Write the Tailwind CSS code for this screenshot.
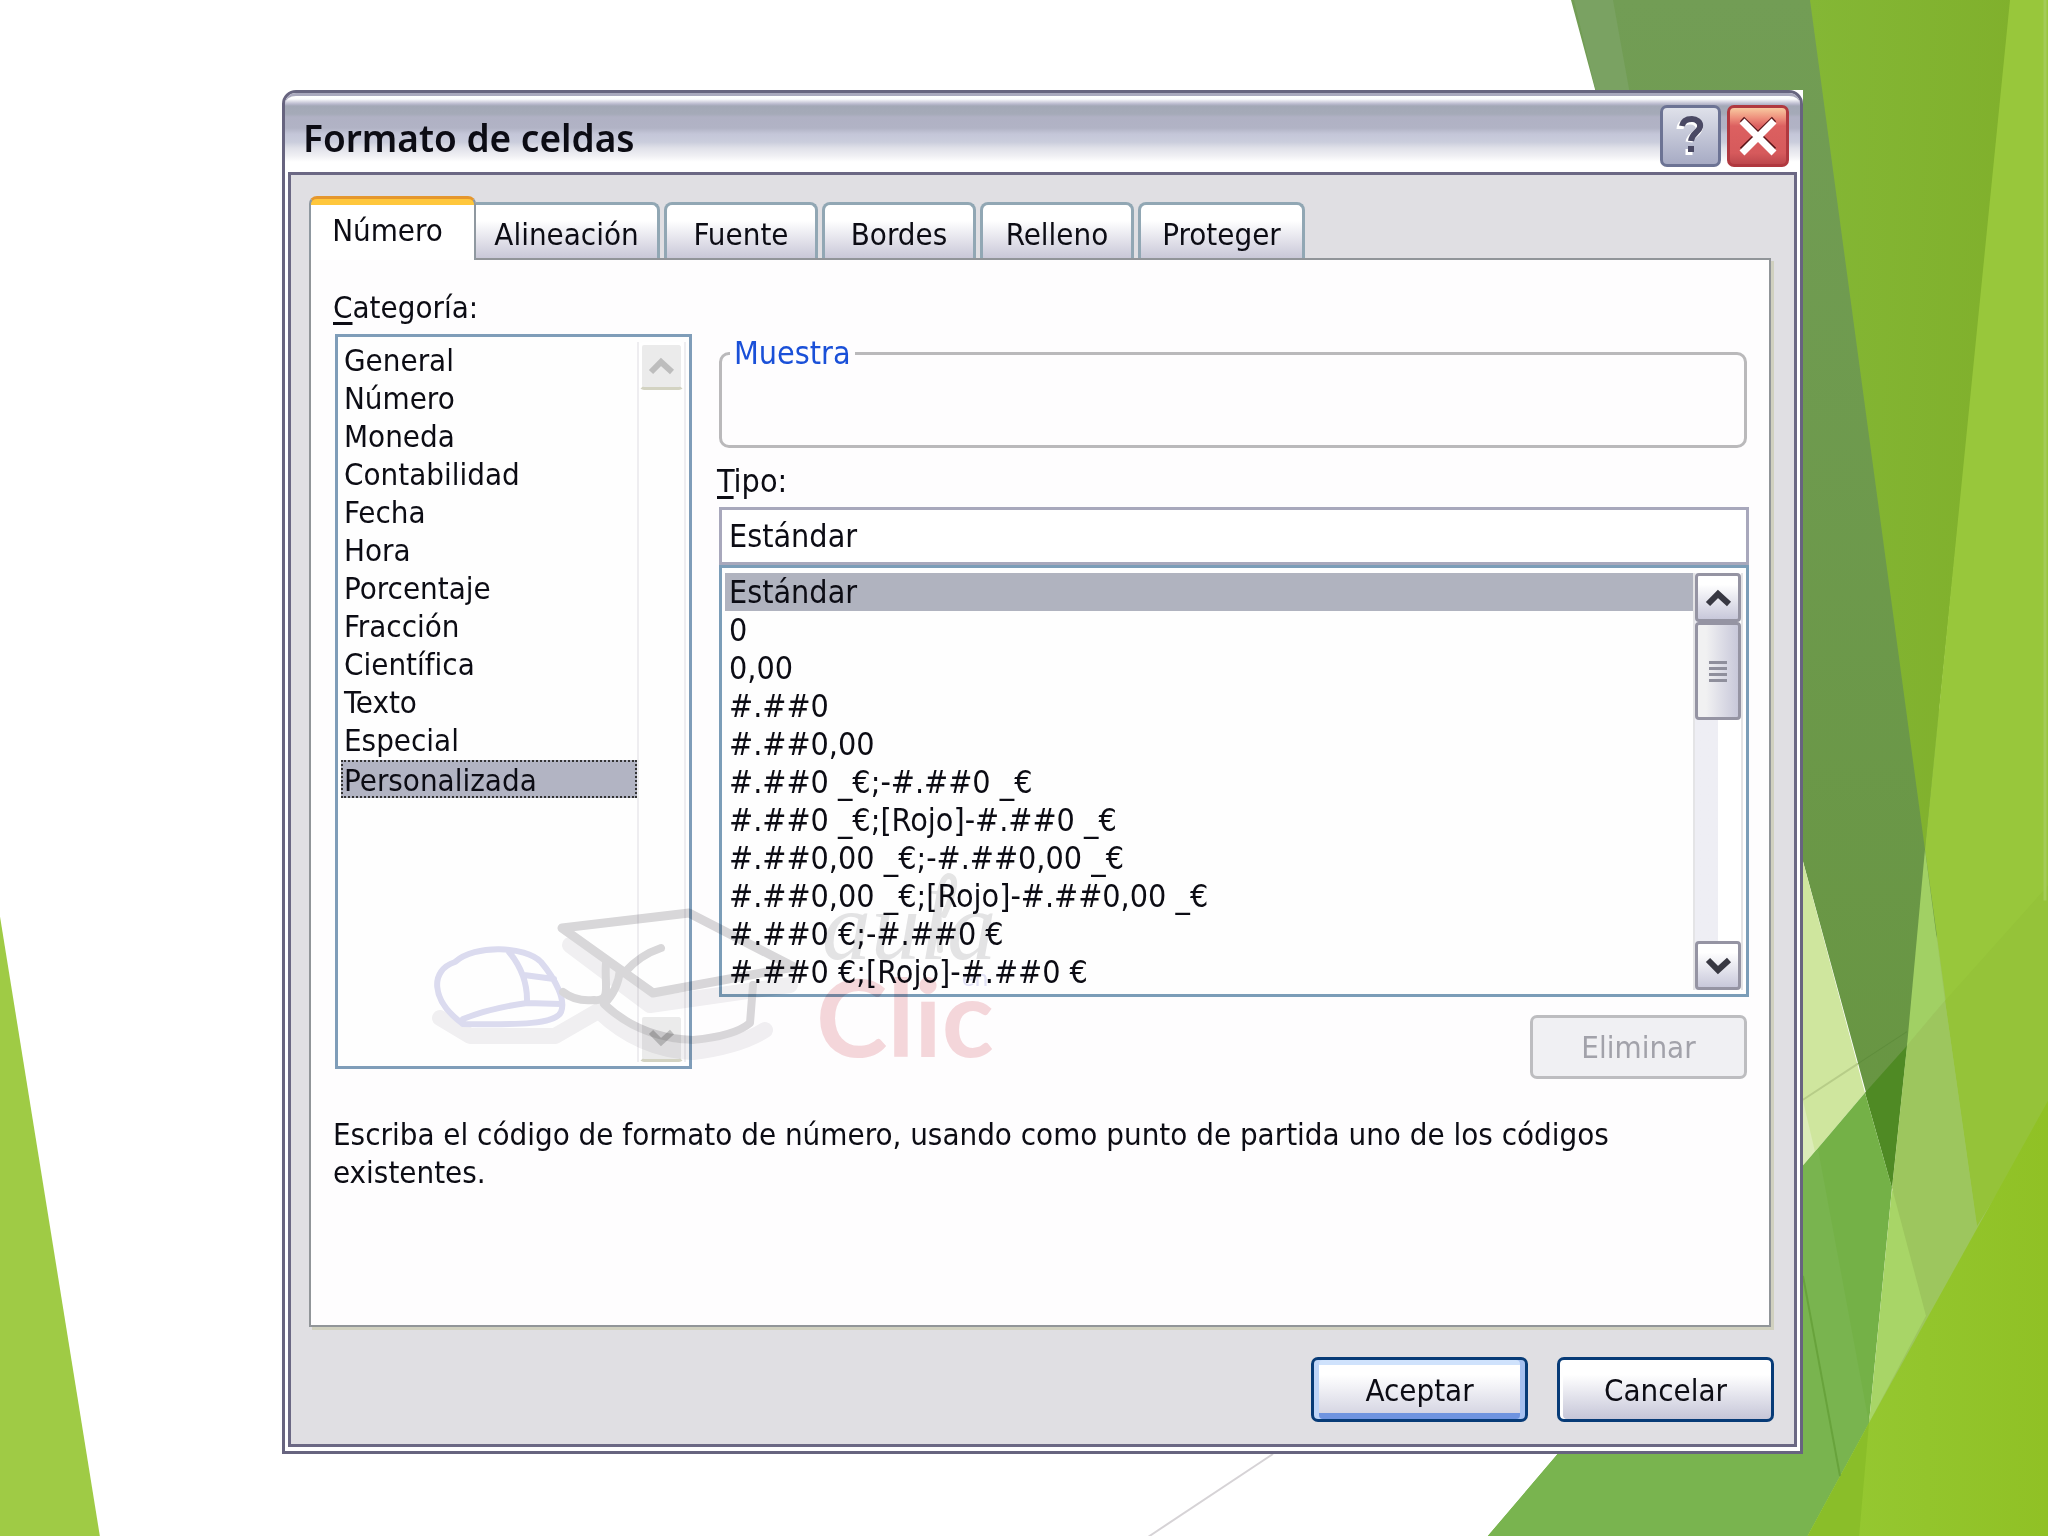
<!DOCTYPE html>
<html lang="es">
<head>
<meta charset="utf-8">
<title>Formato de celdas</title>
<script src="https://cdn.jsdelivr.net/npm/@tailwindcss/browser@4"></script>
</head>
<body class="relative min-h-screen bg-white overflow-x-hidden font-['DejaVu_Sans_Condensed','DejaVu_Sans',sans-serif] text-[31px] leading-[38px] text-[#0c0c14]">

<!-- Faceted slide background -->
<svg class="absolute inset-0 h-full w-full" viewBox="0 0 2048 1536" preserveAspectRatio="none" aria-hidden="true">
  <defs>
    <linearGradient id="gb" x1="0" y1="0" x2="1" y2="0.25"><stop offset="0" stop-color="#84b735"/><stop offset="1" stop-color="#80b02c"/></linearGradient>
    <linearGradient id="gm" x1="0" y1="0" x2="0" y2="1"><stop offset="0" stop-color="#729d55"/><stop offset="1" stop-color="#679541"/></linearGradient>
    <linearGradient id="gf" x1="0" y1="0" x2="1" y2="0"><stop offset="0" stop-color="#96c933"/><stop offset="1" stop-color="#90c125"/></linearGradient>
  </defs>
  <polygon points="0,916 100,1536 0,1536" fill="#9fcb45"/>
  <path d="M1273 1453L1148 1536" stroke="#d6d3d6" stroke-width="2"/>
  <!-- base under the facets, so that no seam shows between neighbours -->
  <polygon points="1925,860 2048,800 2048,1536 1830,1536 1872,1410" fill="#9dc65e"/>
  <polygon points="1571,0 1830,0 1960,849 1907,1045 1892,1187 1803,861" fill="url(#gm)"/>
  <polygon points="1574,0 1613,0 1631,100 1598,100" fill="#7aa262"/>
  <polygon points="1810,0 2012,0 1925,849" fill="url(#gb)"/>
  <polygon points="2010,0 2048,0 2048,1110 1977,1225 1925,849" fill="#98c73b"/>
  <polygon points="1945,1000 2048,885 2048,1110 1977,1225" fill="#95c339"/>
  <polygon points="1803,861 1865,1092 1803,1165" fill="#cfe69e"/>
  <polygon points="1803,1100 1815,1151 1803,1165" fill="#dcecb8"/>
  <polygon points="1865,1092 1907,1045 1892,1187" fill="#4f8a24"/>
  <polygon points="1803,1165 1865,1092 1892,1187 1869,1422 1807,1536 1487,1536" fill="#74b147"/>
  <polygon points="1803,1165 1818,1148 1869,1422 1807,1536 1487,1536" fill="#79b44f"/>
  <polygon points="1925,849 1945,1000 1907,1045" fill="#a1d064"/>
  <polygon points="1907,1045 1945,1000 1977,1225 1926,1315 1892,1187" fill="#9dc65e"/>
  <polygon points="1892,1187 1926,1315 1869,1422" fill="#a8d567"/>
  <polygon points="1869,1422 2048,1100 2048,1536 1807,1536" fill="url(#gf)"/>
  <polygon points="1869,1422 1859,1536 1807,1536" fill="#8abe29"/>
  <path d="M1803 1099L1858 1063" stroke="#b7cd88" stroke-width="2"/>
  <path d="M1858 1063L1907 1031" stroke="#5f8d3c" stroke-width="1"/>
  <path d="M1803 1275L1840 1475" stroke="#68a33c" stroke-width="2"/>
  <path d="M2045 0V900" stroke="#a3cb57" stroke-width="3"/>
</svg>

<main class="relative pt-[90px] pr-[245px] pb-[83px] pl-[282px]">
  <div class="bg-white">
  <section aria-labelledby="dlg-title" class="rounded-t-[14px] border-[3px] border-[#67647f] bg-white">

    <!-- Title bar -->
    <header class="flex h-[79px] items-center justify-between rounded-t-[11px] border-t-[3px] border-[#a9a8bd] bg-[linear-gradient(#ffffff_0px,#fbfbfd_3px,#b9b9cd_8px,#a3a8b6_10px,#a5aab8_18px,#b0b1c4_21px,#b1b3c5_32px,#c4c6d8_38px,#cacddc_46px,#e0e1e9_52px,#f0f0f4_60px,#ffffff_66px)] pr-[11px] pl-[18px]">
      <h1 id="dlg-title" class="pt-[8px] font-['Noto_Sans',sans-serif] text-[37px] leading-[44px] font-semibold">Formato de celdas</h1>
      <div class="flex gap-[6px] pt-[4px]">
        <button type="button" aria-label="Ayuda" class="flex h-[62px] w-[61px] items-center justify-center rounded-[7px] border-[3px] border-[#6c7394] bg-linear-to-b from-[#dfe1ea] to-[#a7abc4]">
          <svg width="30" height="42" viewBox="0 0 30 42" fill="none"><path d="M4 14C4 9 9 6 14 6S24 9 23 14S14 20 13 27M13 34V40" stroke="#fff" stroke-width="7"/><path d="M6 11C7 5 12 4 16 4S25 7 24 12S16 18 15 26M15 31V37" stroke="#4a4964" stroke-width="6"/></svg>
        </button>
        <button type="button" aria-label="Cerrar" class="flex h-[62px] w-[62px] items-center justify-center rounded-[7px] border-[3px] border-[#b0383f] bg-[linear-gradient(#f8c9a0_0px,#ee8f7c_10px,#dc6060_18px,#d65a5c_45px,#b8444a_58px)]">
          <svg width="42" height="42" viewBox="0 0 42 42" fill="none"><path d="M5 4L37 35M37 4L5 35" stroke="#5a1519" stroke-width="6"/><path d="M5 6L37 38M37 6L5 38" stroke="#fff" stroke-width="7"/></svg>
        </button>
      </div>
    </header>

    <div class="mx-[3px] mb-[4px] border-[3px] border-[#6b6884] bg-[#e0dfe3] pt-[21px] pr-[23px] pb-[22px] pl-[18px]">

      <!-- Tabs -->
      <div role="tablist" class="flex items-end pl-[167px]">
        <button role="tab" aria-selected="true" type="button" class="relative z-10 -mb-[2px] -ml-[167px] flex h-[64px] w-[167px] items-center justify-center rounded-t-[8px] border-x-[2px] border-t-[3px] border-x-[#8f98a0] border-t-[#e5972d] bg-[linear-gradient(#ffc73c_0px,#ffc73c_6px,#ffffff_6px)] pr-[10px]">Número</button>
        <button role="tab" aria-selected="false" type="button" class="mr-[4px] h-[56px] w-[184px] rounded-tr-[8px] border-t-[3px] border-r-[3px] border-[#91a7b4] bg-linear-to-b from-white from-30% to-[#c9c8d8] pt-[4px]">Alineación</button>
        <button role="tab" aria-selected="false" type="button" class="mr-[4px] h-[56px] w-[154px] rounded-t-[8px] border-x-[3px] border-t-[3px] border-[#91a7b4] bg-linear-to-b from-white from-30% to-[#c9c8d8] pt-[4px]">Fuente</button>
        <button role="tab" aria-selected="false" type="button" class="mr-[4px] h-[56px] w-[154px] rounded-t-[8px] border-x-[3px] border-t-[3px] border-[#91a7b4] bg-linear-to-b from-white from-30% to-[#c9c8d8] pt-[4px]">Bordes</button>
        <button role="tab" aria-selected="false" type="button" class="mr-[4px] h-[56px] w-[154px] rounded-t-[8px] border-x-[3px] border-t-[3px] border-[#91a7b4] bg-linear-to-b from-white from-30% to-[#c9c8d8] pt-[4px]">Relleno</button>
        <button role="tab" aria-selected="false" type="button" class="h-[56px] w-[167px] rounded-t-[8px] border-x-[3px] border-t-[3px] border-[#91a7b4] bg-linear-to-b from-white from-30% to-[#c9c8d8] pt-[4px]">Proteger</button>
      </div>

      <!-- Panel -->
      <div role="tabpanel" class="relative border-[2px] border-[#919599] bg-[#fefdfe] pt-[28px] pr-[20px] pb-[134px] pl-[22px] shadow-[3px_3px_0_#d0d0bf]">
        <div class="flex gap-[28px]">
          <div class="w-[358px] shrink-0 pl-[2px]">
            <label for="cat" class="-ml-[2px] block h-[46px]"><u class="underline-offset-4">C</u>ategoría:</label>
            <div class="flex h-[735px] w-[357px] border-[3px] border-[#7f9db9] bg-[#fefefe] px-[3px] pt-[5px] pb-[4px]">
              <select id="cat" size="12" class="h-[456px] min-w-0 flex-1 appearance-none overflow-hidden bg-transparent p-0 outline-none">
                <option class="h-[38px] min-h-0 py-0 pr-0 pl-[3px]">General</option>
                <option class="h-[38px] min-h-0 py-0 pr-0 pl-[3px]">Número</option>
                <option class="h-[38px] min-h-0 py-0 pr-0 pl-[3px]">Moneda</option>
                <option class="h-[38px] min-h-0 py-0 pr-0 pl-[3px]">Contabilidad</option>
                <option class="h-[38px] min-h-0 py-0 pr-0 pl-[3px]">Fecha</option>
                <option class="h-[38px] min-h-0 py-0 pr-0 pl-[3px]">Hora</option>
                <option class="h-[38px] min-h-0 py-0 pr-0 pl-[3px]">Porcentaje</option>
                <option class="h-[38px] min-h-0 py-0 pr-0 pl-[3px]">Fracción</option>
                <option class="h-[38px] min-h-0 py-0 pr-0 pl-[3px]">Científica</option>
                <option class="h-[38px] min-h-0 py-0 pr-0 pl-[3px]">Texto</option>
                <option class="h-[38px] min-h-0 py-0 pr-0 pl-[3px]">Especial</option>
                <option selected class="h-[38px] min-h-0 border-[2px] border-dotted border-[#333] bg-[#b2b4c3] py-0 pr-0 pl-[1px] leading-[34px] checked:bg-[#b2b4c3] checked:text-[#0c0c14]">Personalizada</option>
              </select>
              <div class="flex w-[49px] flex-col justify-between border-x-[2px] border-[#eeedf0]">
                <button type="button" disabled aria-label="Subir" class="flex h-[48px] items-center justify-center rounded-[5px] border-[3px] border-white border-b-[#d3d3c2] bg-[#ebebeb]"><svg width="27" height="18" viewBox="0 0 27 18" fill="none"><path d="M3 15L13 5L24 15" stroke="#bdbdbd" stroke-width="6"/></svg></button>
                <button type="button" disabled aria-label="Bajar" class="flex h-[48px] items-center justify-center rounded-[5px] border-[3px] border-white border-b-[#d3d3c2] bg-[#ebebeb]"><svg width="27" height="18" viewBox="0 0 27 18" fill="none"><path d="M3 3L13 13L24 3" stroke="#bdbdbd" stroke-width="6"/></svg></button>
              </div>
            </div>
          </div>

          <div class="min-w-0 flex-1 pt-[46px] text-[32px]">
            <fieldset class="mr-[2px] h-[114px] rounded-[10px] border-[3px] border-[#bab9bb] pl-[8px]">
              <legend class="px-[4px] text-[#1a50d8]">Muestra</legend>
            </fieldset>
            <label for="tipo" class="-ml-[2px] mt-[14px] block h-[45px]"><u class="underline-offset-4">T</u>ipo:</label>
            <input id="tipo" type="text" value="Estándar" class="block h-[58px] w-full border-[3px] border-[#a8a8bc] bg-white px-[7px] outline-none">
            <div class="flex h-[432px] border-[3px] border-[#7b9db8] bg-[#fefefe] px-[3px] pt-[5px] pb-[4px]">
              <select aria-label="Códigos de formato" size="11" class="h-[418px] min-w-0 flex-1 appearance-none overflow-hidden bg-transparent p-0 outline-none">
                <option selected class="h-[38px] min-h-0 bg-[#b0b3bf] py-0 pr-0 pl-[4px] checked:bg-[#b0b3bf] checked:text-[#0c0c14]">Estándar</option>
                <option class="h-[38px] min-h-0 py-0 pr-0 pl-[4px]">0</option>
                <option class="h-[38px] min-h-0 py-0 pr-0 pl-[4px]">0,00</option>
                <option class="h-[38px] min-h-0 py-0 pr-0 pl-[4px]">#.##0</option>
                <option class="h-[38px] min-h-0 py-0 pr-0 pl-[4px]">#.##0,00</option>
                <option class="h-[38px] min-h-0 py-0 pr-0 pl-[4px]">#.##0 _€;-#.##0 _€</option>
                <option class="h-[38px] min-h-0 py-0 pr-0 pl-[4px]">#.##0 _€;[Rojo]-#.##0 _€</option>
                <option class="h-[38px] min-h-0 py-0 pr-0 pl-[4px]">#.##0,00 _€;-#.##0,00 _€</option>
                <option class="h-[38px] min-h-0 py-0 pr-0 pl-[4px]">#.##0,00 _€;[Rojo]-#.##0,00 _€</option>
                <option class="h-[38px] min-h-0 py-0 pr-0 pl-[4px]">#.##0 €;-#.##0 €</option>
                <option class="h-[38px] min-h-0 py-0 pr-0 pl-[4px]">#.##0 €;[Rojo]-#.##0 €</option>
              </select>
              <div class="flex w-[50px] flex-col border-x-[2px] border-[#e4e4e6] bg-linear-to-r from-[#eeeef4] from-50% to-white to-50%">
                <button type="button" aria-label="Subir" class="flex h-[49px] items-center justify-center rounded-[4px] border-[3px] border-[#9594a3] bg-linear-to-b from-white from-20% to-[#c8c8da]"><svg width="27" height="18" viewBox="0 0 27 18" fill="none"><path d="M3 15L13 5L24 15" stroke="#383842" stroke-width="6"/></svg></button>
                <div class="flex h-[98px] flex-col items-center justify-center gap-[3px] rounded-[4px] border-[3px] border-[#9594a3] bg-linear-to-r from-[#f1f1f2] from-20% to-[#c8c8da]">
                  <i class="h-[3px] w-[18px] bg-[#8f8f9c]"></i><i class="h-[3px] w-[18px] bg-[#8f8f9c]"></i><i class="h-[3px] w-[18px] bg-[#8f8f9c]"></i><i class="h-[3px] w-[18px] bg-[#8f8f9c]"></i>
                </div>
                <button type="button" aria-label="Bajar" class="mt-auto flex h-[49px] items-center justify-center rounded-[4px] border-[3px] border-[#9594a3] bg-linear-to-b from-white from-20% to-[#c8c8da]"><svg width="27" height="18" viewBox="0 0 27 18" fill="none"><path d="M3 3L13 13L24 3" stroke="#383842" stroke-width="6"/></svg></button>
              </div>
            </div>
            <div class="mr-[2px] mt-[18px] flex justify-end">
              <button type="button" disabled class="h-[64px] w-[217px] rounded-[7px] border-[3px] border-[#bdbdc0] bg-[#f0f0f3] text-[31px] text-[#a2a2aa]">Eliminar</button>
            </div>
          </div>
        </div>

        <p class="mt-[36px] pr-[120px]">Escriba el código de formato de número, usando como punto de partida uno de los códigos existentes.</p>

        <!-- aulaClic watermark -->
        <svg class="pointer-events-none absolute top-[600px] left-[119px] h-[220px] w-[600px] mix-blend-multiply" viewBox="430 860 600 220" fill="none" aria-hidden="true">
          <g stroke-linecap="round" stroke-linejoin="round">
            <path d="M440 1018L470 1036H555L600 1010M600 1012Q640 1050 693 1052Q740 1046 765 1030M570 945L650 1005L790 985" stroke="#f1f0f2" stroke-width="16"/>
            <path d="M463 1024C430 1000 430 970 455 962C475 944 525 946 541 962C556 980 566 1000 561 1012C556 1024 520 1025 463 1024ZM463 1019Q490 1008 527 1003L561 1004M509 952Q528 975 527 1003M524 975L554 979" stroke="#dcdcf0" stroke-width="6"/>
            <path d="M562 928L689 913L794 967L653 993Z" stroke="#d9d8da" stroke-width="9"/>
            <path d="M661 948Q640 955 625 972M606 963C604 985 612 1002 594 1000Q576 1002 563 992M620 970Q618 990 604 1004Q640 1038 693 1040Q735 1036 750 1023L753 985" stroke="#d9d8da" stroke-width="8"/>
            <path d="M940 950Q935 880 948 876Q962 876 944 915" stroke="#e6e6e6" stroke-width="6"/>
          </g>
          <text x="822" y="959" font-family="Liberation Serif, serif" font-style="italic" font-size="98" fill="#e4e4e5">aula</text>
          <text x="962" y="986" font-family="Lato, sans-serif" font-size="24" fill="#e2e2f6">en</text>
          <text x="816" y="1057" font-family="Lato, sans-serif" font-weight="700" font-size="108" fill="#f5d8db">Clic</text>
        </svg>
      </div>

      <!-- Dialog buttons -->
      <div class="flex justify-end gap-[29px] pt-[30px]">
        <button type="button" class="h-[65px] w-[217px] rounded-[7px] border-[3px] border-[#073b77] bg-linear-to-b from-white from-25% to-[#d0d0df] shadow-[inset_5px_0_0_#bfd5f8,inset_-5px_0_0_#a5c0f0,inset_0_5px_0_#cfe2fc,inset_0_-6px_0_#6f94e0]">Aceptar</button>
        <button type="button" class="-mr-[3px] h-[65px] w-[217px] rounded-[7px] border-[3px] border-[#073b77] bg-linear-to-b from-white from-25% to-[#c6c6d8] shadow-[inset_3px_0_0_#ffffff]">Cancelar</button>
      </div>
    </div>
  </section>
  </div>
</main>
</body>
</html>
